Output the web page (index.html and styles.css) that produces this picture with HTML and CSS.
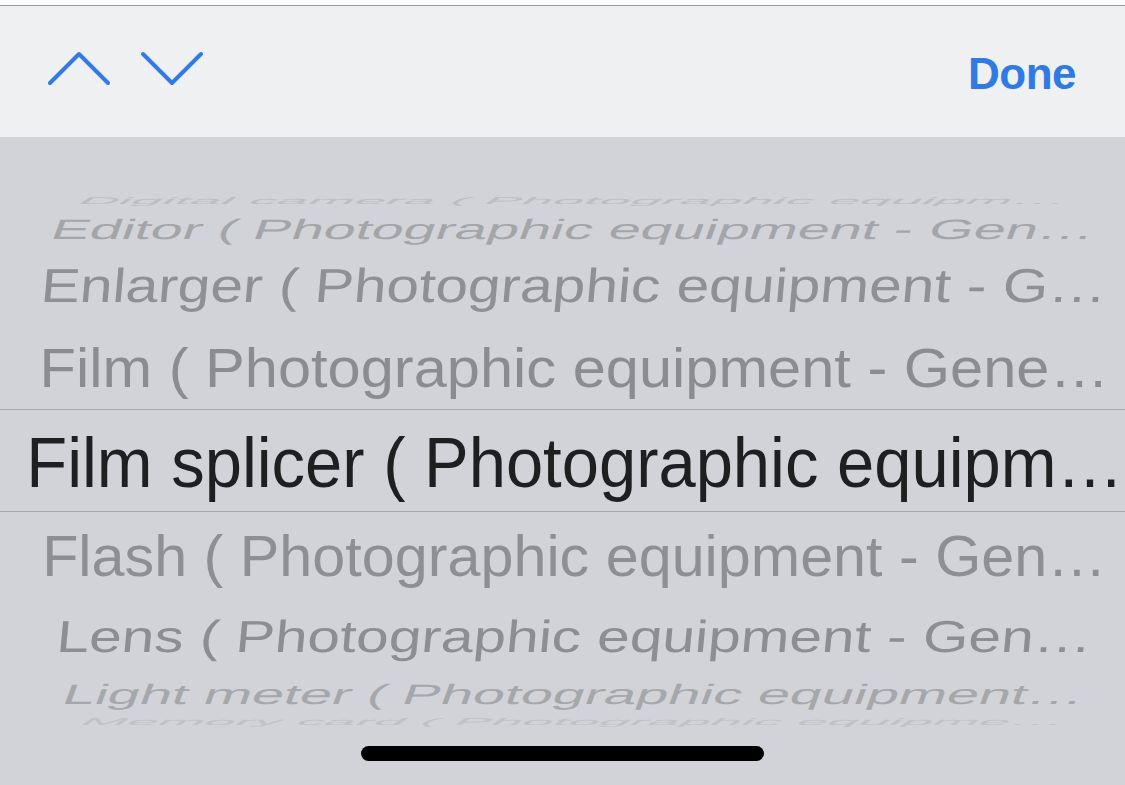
FILE: index.html
```html
<!DOCTYPE html>
<html lang="en">
<head>
<meta charset="utf-8">
<title>Picker</title>
<link rel="stylesheet" href="styles.css">
</head>
<body>
<div class="screen">
  <div class="topstrip"></div>
  <div class="toolbar">
    <div class="arrows">
      <svg class="chev" width="62" height="36" viewBox="0 0 62 36">
        <polyline points="2,32 31,3 60,32" fill="none" stroke="#347ae6" stroke-width="4" stroke-linecap="round" stroke-linejoin="round"/>
      </svg>
      <svg class="chev" width="62" height="36" viewBox="0 0 62 36">
        <polyline points="2,3 31,32 60,3" fill="none" stroke="#347ae6" stroke-width="4" stroke-linecap="round" stroke-linejoin="round"/>
      </svg>
    </div>
    <div class="done">Done</div>
  </div>
  <div class="picker">
    <div class="row r-digital"><span class="txt">Digital camera ( Photographic equipm…</span></div>
    <div class="row r-editor"><span class="txt">Editor ( Photographic equipment - Gen…</span></div>
    <div class="row r-enlarger"><span class="txt">Enlarger ( Photographic equipment - G…</span></div>
    <div class="row r-film"><span class="txt">Film ( Photographic equipment - Gene…</span></div>
    <div class="row r-selected"><span class="txt">Film splicer ( Photographic equipm…</span></div>
    <div class="row r-flash"><span class="txt">Flash ( Photographic equipment - Gen…</span></div>
    <div class="row r-lens"><span class="txt">Lens ( Photographic equipment - Gen…</span></div>
    <div class="row r-light"><span class="txt">Light meter ( Photographic equipment…</span></div>
    <div class="row r-memory"><span class="txt">Memory card ( Photographic equipme…</span></div>
    <div class="home"><div class="home-bar"></div></div>
  </div>
</div>
</body>
</html>
```
FILE: styles.css
```css
html, body {
  margin: 0;
  padding: 0;
}
body {
  width: 1125px;
  height: 785px;
  overflow: hidden;
  background: #d1d3d8;
  font-family: "Liberation Sans", Arial, sans-serif;
}
.screen {
  width: 1125px;
  height: 785px;
  display: flex;
  flex-direction: column;
  overflow: hidden;
}
.topstrip {
  height: 5px;
  background: #fbfbfb;
  border-bottom: 1px solid #9c9c9e;
  flex: none;
}
.toolbar {
  height: 131px;
  flex: none;
  background: #eff0f2;
  display: flex;
  align-items: center;
  justify-content: space-between;
  padding: 0 49px 0 48px;
}
.arrows {
  display: flex;
  align-items: center;
  gap: 31px;
  margin-top: -5px;
}
.chev {
  display: block;
}
.done {
  color: #2f7ae5;
  font-size: 44px;
  font-weight: 700;
  letter-spacing: -0.5px;
  line-height: 1;
  margin-top: 4px;
}
.picker {
  flex: 1;
  display: flex;
  flex-direction: column;
  padding-top: 52px;
  overflow: hidden;
  background: #d1d3d8;
}
.row {
  flex: none;
  display: flex;
  align-items: center;
  justify-content: center;
  padding-left: 24px;
  box-sizing: border-box;
}
.txt {
  flex: none;
  display: block;
  white-space: nowrap;
  font-size: 70px;
  line-height: 70px;
  color: #8d8e92;
  transform-origin: 50% 50%;
}
.r-digital { height: 19px; }
.r-digital .txt {
  color: #bcbec2;
  transform: translateY(2px) scale(0.797, 0.14) skewX(-14deg);
}
.r-editor { height: 37px; }
.r-editor .txt {
  color: #a4a5a9;
  transform: translateY(2px) scale(0.823, 0.4) skewX(-10deg);
}
.r-enlarger { height: 77px; }
.r-enlarger .txt {
  color: #8f9094;
  transform: translateY(2px) scale(0.838, 0.68) skewX(-4deg);
}
.r-film { height: 87px; }
.r-film .txt {
  color: #8b8c90;
  transform: translateY(2px) scale(0.851, 0.78);
}
.r-selected {
  height: 103px;
  border-top: 1px solid #a8a9ad;
  border-bottom: 1px solid #a8a9ad;
}
.r-selected .txt {
  color: #1f1f21;
  transform: translateY(2px) scaleX(0.956);
}
.r-flash { height: 83px; }
.r-flash .txt {
  color: #8e8f93;
  transform: translateY(2px) scale(0.847, 0.82);
}
.r-lens { height: 79px; }
.r-lens .txt {
  color: #8d8e92;
  transform: translateY(2px) scale(0.837, 0.64) skewX(-4deg);
}
.r-light { height: 35px; }
.r-light .txt {
  color: #a6a7ab;
  transform: translateY(2px) scale(0.823, 0.4) skewX(-10deg);
}
.r-memory { height: 21px; }
.r-memory .txt {
  color: #c0c2c6;
  transform: translateY(2px) scale(0.793, 0.14) skewX(-14deg);
}
.home {
  flex: none;
  display: flex;
  justify-content: center;
  padding-top: 16px;
}
.home-bar {
  width: 403px;
  height: 15px;
  border-radius: 8px;
  background: #000;
}
```
